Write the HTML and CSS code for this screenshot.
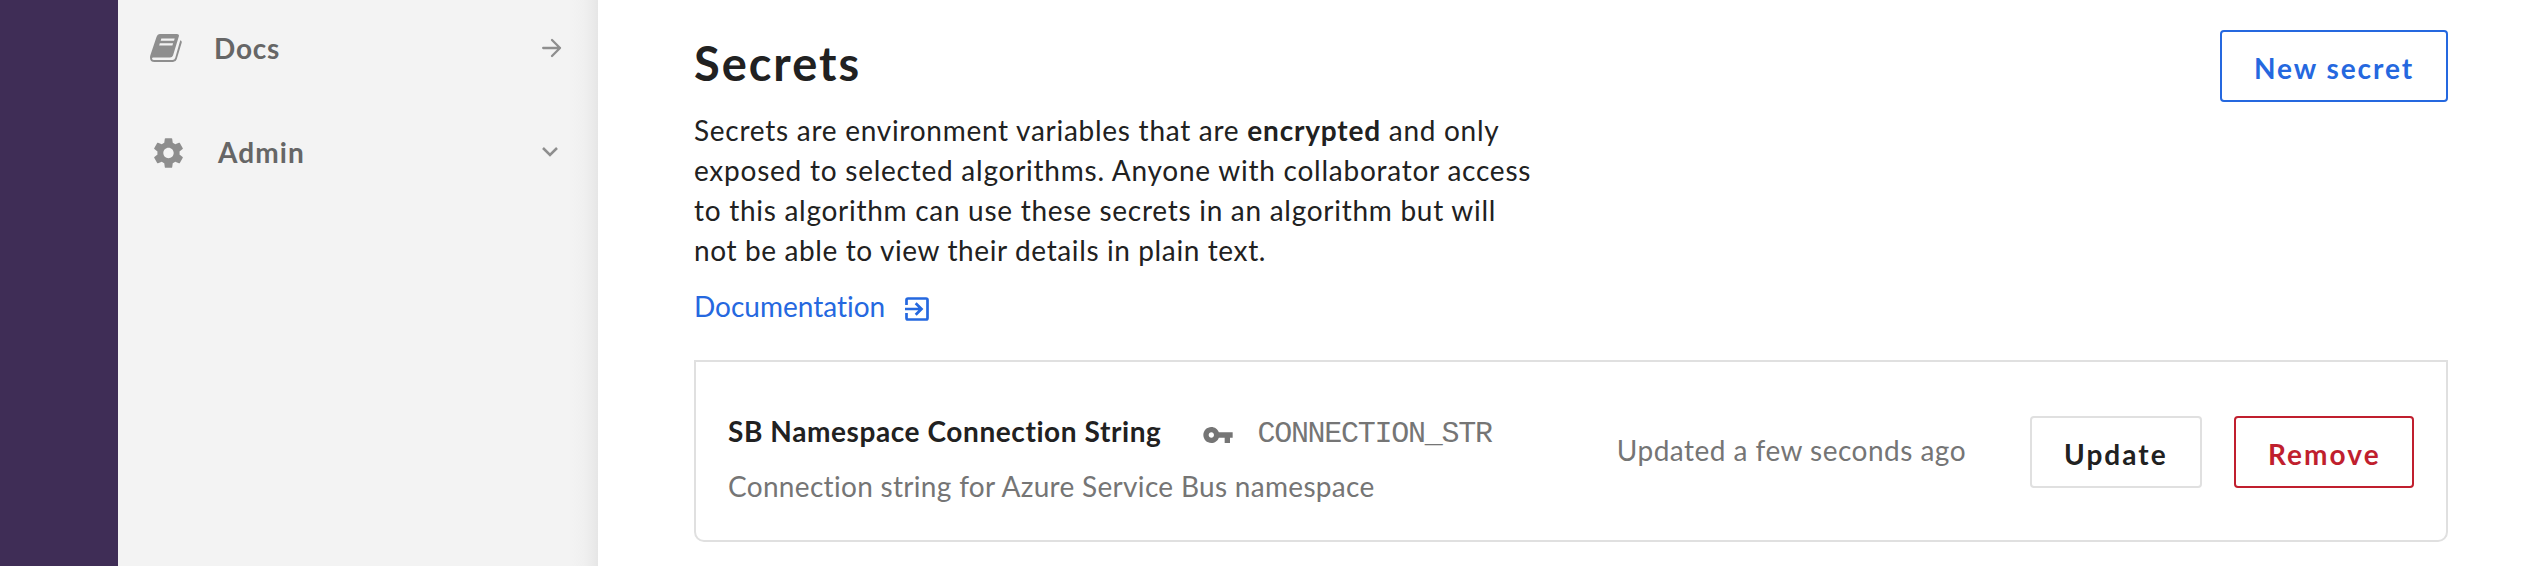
FILE: index.html
```
<!DOCTYPE html>
<html lang="en">
<head>
<meta charset="utf-8">
<title>Secrets</title>
<link rel="stylesheet" href="styles.css">
</head>
<body>
<div class="app">
  <div class="rail"></div>
  <nav class="sidebar">
    <a class="nav-item docs">
      <svg class="book" viewBox="0 0 32 28" width="32" height="28">
        <path fill="#8e8e8e" fill-rule="evenodd" d="M10 0H27Q29.6 0 28.8 2.6L23 21.500Q22.300 23.500 20 23.500H3.200Q2 23.500 2 24.500Q2.200 26 4 26H22.500Q24.500 26 25.200 24L30.300 6.200Q32.300 7 31.600 9L26.700 25.200Q25.800 28 23 28H4.500Q0 28 0 23.500Q0 22 .6 20.500L6.500 3Q7.500 0 10 0ZM11.300 4.500L10.700 6.800H24L24.700 4.500ZM9.800 9.200L9.200 11.500H22.400L23.100 9.200Z"/>
      </svg>
      <span class="nav-label">Docs</span>
      <svg class="arrow" viewBox="0 0 20 20" width="20" height="20"><path d="M1.200 10H18M10 2L18 10L10 18" fill="none" stroke="#8e8e8e" stroke-width="2.300" stroke-linecap="round" stroke-linejoin="round"/></svg>
    </a>
    <a class="nav-item admin">
      <svg class="gear" viewBox="2.200 2 19.600 20" width="29" height="30"><path fill="#8e8e8e" d="M19.430 12.980c.04-.32.07-.64.07-.98s-.03-.66-.07-.98l2.110-1.650c.19-.15.24-.42.12-.64l-2-3.460c-.12-.22-.39-.3-.61-.22l-2.490 1c-.52-.4-1.080-.73-1.690-.98l-.38-2.650C14.460 2.180 14.250 2 14 2h-4c-.25 0-.46.18-.49.42l-.38 2.650c-.61.25-1.170.59-1.690.98l-2.490-1c-.23-.09-.49 0-.61.22l-2 3.460c-.13.22-.07.49.12.64l2.110 1.650c-.04.32-.07.65-.07.98s.03.66.07.98l-2.110 1.650c-.19.15-.24.42-.12.64l2 3.460c.12.22.39.3.61.22l2.490-1c.52.4 1.080.73 1.690.98l.38 2.650c.03.24.24.42.49.42h4c.25 0 .46-.18.49-.42l.38-2.650c.61-.25 1.170-.59 1.690-.98l2.490 1c.23.09.49 0 .61-.22l2-3.460c.12-.22.07-.49-.12-.64l-2.110-1.650zM12 15.500c-1.930 0-3.500-1.570-3.500-3.500s1.570-3.500 3.500-3.500 3.500 1.570 3.500 3.500-1.570 3.500-3.500 3.500z"/></svg>
      <span class="nav-label">Admin</span>
      <svg class="chevron" viewBox="0 0 18 12" width="18" height="12"><path d="M2 2L9 9L16 2" fill="none" stroke="#8e8e8e" stroke-width="2.500"/></svg>
    </a>
  </nav>
  <main class="content">
    <header class="head">
      <div class="intro">
        <h1 class="title">Secrets</h1>
        <p class="text">
          <span class="line l1"><span>Secrets are environment variables that are </span><b>encrypted</b><span class="tail"> and only</span></span>
          <span class="line l2">exposed to selected algorithms. Anyone with collaborator access</span>
          <span class="line l3">to this algorithm can use these secrets in an algorithm but will</span>
          <span class="line l4">not be able to view their details in plain text.</span>
        </p>
        <a class="doc-link">Documentation
          <svg viewBox="0 0 24 24" width="24" height="24"><path d="M1.500 8V3Q1.500 1.500 3 1.500H21Q22.500 1.500 22.500 3V21Q22.500 22.500 21 22.500H3Q1.500 22.500 1.500 21V16M0 12H16M10.700 6.200L16.500 12L10.700 17.800" fill="none" stroke="#2568df" stroke-width="2.700"/></svg>
        </a>
      </div>
      <button class="btn new">New secret</button>
    </header>
    <section class="card">
      <div class="info">
        <div class="name-row">
          <strong class="name">SB Namespace Connection String</strong>
          <svg class="key" viewBox="1 6 22 12" width="30" height="16"><path fill="#757575" d="M12.650 10C11.830 7.670 9.610 6 7 6c-3.310 0-6 2.690-6 6s2.690 6 6 6c2.610 0 4.830-1.670 5.650-4H17v4h4v-4h2v-4H12.650zM7 14c-1.100 0-2-.9-2-2s.9-2 2-2 2 .9 2 2-.9 2-2 2z"/></svg>
          <code class="code">CONNECTION_STR</code>
        </div>
        <div class="desc">Connection string for Azure Service Bus namespace</div>
      </div>
      <div class="actions">
        <span class="updated">Updated a few seconds ago</span>
        <button class="btn update">Update</button>
        <button class="btn remove">Remove</button>
      </div>
    </section>
  </main>
</div>
</body>
</html>
```
FILE: styles.css
```
* { box-sizing: border-box; }
body {
  margin: 0;
  background: #fff;
  color: #212121;
  font: 28px/32px Lato, sans-serif;
  font-variant-ligatures: none;
}
svg { display: block; flex: none; }
.app { display: flex; height: 566px; overflow: hidden; }
.rail { width: 118px; flex: none; background: #3f2d56; }
.sidebar {
  width: 480px;
  flex: none;
  padding-top: 31px;
  background: linear-gradient(to left, #e6e6e6 0, #ebebeb 6px, #f0f0f0 14px, #f3f3f3 26px);
}
.nav-item { display: flex; align-items: center; height: 32px; color: #666; font-weight: 700; }
.nav-label { flex: 1; padding-top: 2px; }
.docs { padding: 0 36px 0 32px; }
.docs .nav-label { padding-left: 32px; letter-spacing: .77px; }
.admin { margin-top: 72px; padding: 0 39px 0 36px; }
.admin .nav-label { padding-left: 35px; letter-spacing: 1.1px; }
.book { margin-top: 2px; }
.arrow { margin-top: 2px; }
.gear { margin-top: 3px; }
.chevron { margin-top: 2px; }
.content { flex: 1; padding: 30px 84px 0 96px; }
.head { display: flex; justify-content: space-between; align-items: flex-start; }
.title { margin: 3px 0 0; font-size: 47px; line-height: 60px; letter-spacing: 1.97px; }
.text { margin: 17px 0 16px; line-height: 40px; }
.line { display: block; white-space: pre; }
.l1 { letter-spacing: .73px; }
.l1 b { letter-spacing: .82px; }
.l1 .tail { letter-spacing: .7px; }
.l2 { letter-spacing: .76px; }
.l3 { letter-spacing: .72px; }
.l4 { letter-spacing: .62px; }
.doc-link { display: flex; align-items: center; gap: 20px; height: 40px; color: #2568df; }
.doc-link svg { margin-top: 5px; }
.btn {
  height: 72px;
  flex: none;
  padding: 20px 0 16px 32px;
  border: 2px solid;
  border-radius: 4px;
  background: #fff;
  font: 700 28px/32px Lato, sans-serif;
  text-align: left;
}
.new { width: 228px; color: #2568df; letter-spacing: 1.95px; }
.update { width: 172px; margin-left: 64px; border-color: #e0e0e0; color: #212121; letter-spacing: 2.05px; }
.remove { width: 180px; margin-left: 32px; color: #c01f2e; letter-spacing: 2.05px; }
.card {
  display: flex;
  justify-content: space-between;
  align-items: flex-start;
  height: 182px;
  margin-top: 34px;
  padding: 53px 32px 0;
  border: 2px solid #e0e0e0;
  border-radius: 0 0 10px 10px;
}
.name-row { display: flex; align-items: center; height: 32px; white-space: nowrap; }
.name { letter-spacing: .59px; }
.key { margin: 7px 24px 0 42px; }
.code {
  color: #757575;
  font: 30px/32px "Liberation Mono", monospace;
  letter-spacing: -1.26px;
  padding-top: 5px;
}
.desc { margin-top: 23px; color: #757575; letter-spacing: .31px; white-space: nowrap; }
.actions { display: flex; align-items: center; padding-top: 1px; }
.updated { color: #757575; letter-spacing: .48px; padding-bottom: 4px; white-space: nowrap; }
```
